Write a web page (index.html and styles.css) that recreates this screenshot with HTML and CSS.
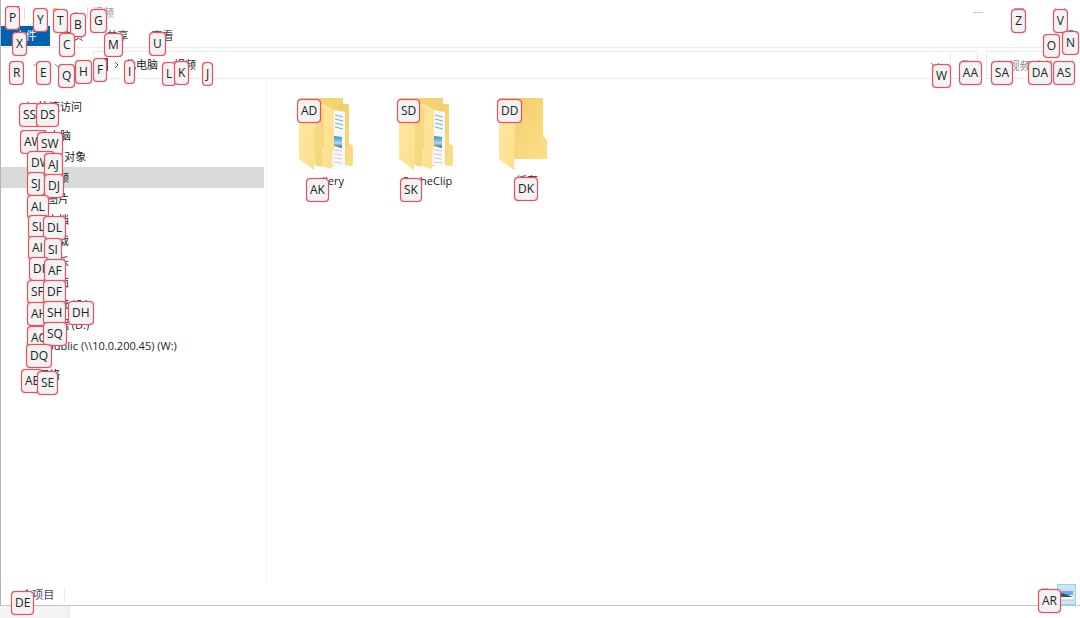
FILE: index.html
```html
<!DOCTYPE html>
<html lang="zh-CN">
<head>
    <meta charset="UTF-8">
    <meta name="viewport" content="width=device-width, initial-scale=1.0">
    <title>视频</title>
    <link rel="stylesheet" href="styles.css">
</head>
<body>
    <svg width="0" height="0" class="defs" aria-hidden="true">
        <defs>
            <linearGradient id="back" x1="0" y1="0" x2="1" y2="1">
                <stop offset="0" stop-color="#efcb68"/>
                <stop offset="1" stop-color="#fcdf88"/>
            </linearGradient>
            <linearGradient id="front" x1="0" y1="0" x2="1" y2="1">
                <stop offset="0" stop-color="#ffe9a2"/>
                <stop offset="1" stop-color="#fbdf8c"/>
            </linearGradient>
            <linearGradient id="sky" x1="0" y1="0" x2="0" y2="1">
                <stop offset="0" stop-color="#2e8fd0"/>
                <stop offset="0.6" stop-color="#a9d8ee"/>
                <stop offset="1" stop-color="#2f6470"/>
            </linearGradient>
            <symbol id="folder-full" viewBox="0 0 60 76">
                <path d="M2 2h43q1 0 1 1v67H20z" fill="#f5d375"/>
                <path d="M46 8h5q1 0 1 1v38l4 3v18q0 2-2 2l-12-2V8z" fill="url(#back)"/>
                <path d="M37 14l11 2v56l-13-3z" fill="#f8f8f8"/>
                <path d="M38 19l8 2M38 23l8 2M38 27l8 2M38 31l8 2" stroke="#63b5dc"/>
                <path d="M37 40l8 1v11l-8-2z" fill="url(#sky)"/>
                <path d="M37 54l8 1M37 58l8 1M37 62l8 1M37 66l8 1" stroke="#ccc"/>
                <path d="M19 9l8-1 10 6v38l-2 3v18l-19-5z" fill="url(#front)"/>
                <path d="M18 9l9 3v38l-2 3v18l-7-2z" fill="#efcc6c" opacity=".5"/>
                <path d="M2 3l16 8v38q0 3-1 5v20L3 64q-1-1-1-3z" fill="url(#front)"/>
            </symbol>
            <symbol id="folder-empty" viewBox="0 0 60 76">
                <path d="M17 71l5 2-5 1zM46 62l9-1-5 2z" fill="#eee"/>
                <path d="M2 2h43q1 0 1 1v37l4 4v17q0 2-2 2H18L2 50z" fill="url(#back)"/>
                <path d="M2 3l16 8v38q0 3-1 5v20L3 64q-1-1-1-3z" fill="url(#front)"/>
            </symbol>
        </defs>
    </svg>

    <div class="window">
        <header class="title-bar">
            <svg class="app-icon" viewBox="0 0 14 14"><path d="M1 0h12v12H1z" fill="#4b4a5e"/><path d="M3 3h8v6H3z" fill="#b9d3ec"/></svg>
            <span class="divider"></span>
            <div class="quick-tools">
                <button type="button" aria-label="属性"><svg viewBox="0 0 10 10"><path d="M1 .5h8v9H1z" fill="#fff" stroke="#aaa"/><path d="M3 5l2 2 3-4" fill="none" stroke="#c44"/></svg></button>
                <button type="button" aria-label="新建文件夹"><svg viewBox="0 0 10 10"><path d="M0 0h4l1 1h5v8H0z" fill="#f6c65b"/></svg></button>
                <button type="button" aria-label="自定义快速访问工具栏"><svg viewBox="0 0 10 10"><path d="M3 5h4M3 7l2 2 2-2" fill="none" stroke="#888"/></svg></button>
            </div>
            <span class="divider"></span>
            <h1 class="title">视频</h1>
            <div class="window-buttons">
                <button type="button" aria-label="最小化"><svg viewBox="0 0 10 10"><path d="M0 4.5h10" stroke="#ccc"/></svg></button>
                <button type="button" aria-label="最大化"><svg viewBox="0 0 10 10"><path d="M.5.5h9v9h-9z" fill="none" stroke="#aaa"/></svg></button>
                <button type="button" aria-label="关闭"><svg viewBox="0 0 10 10"><path d="M0 0l10 10M10 0L0 10" stroke="#aaa"/></svg></button>
            </div>
        </header>

        <nav class="ribbon">
            <button type="button" class="tab tab-file">文件</button>
            <button type="button" class="tab">主页</button>
            <button type="button" class="tab">共享</button>
            <button type="button" class="tab">查看</button>
            <div class="ribbon-tools">
                <button type="button" aria-label="展开功能区"><svg viewBox="0 0 10 10"><path d="M2 4l3 3 3-3" fill="none" stroke="#777"/></svg></button>
                <button type="button" class="help" aria-label="帮助"><svg viewBox="0 0 10 10"><circle cx="5" cy="5" r="5" fill="#1f6fc4"/></svg></button>
            </div>
        </nav>

        <div class="address-row">
            <div class="history">
                <button type="button" aria-label="后退"><svg viewBox="0 0 10 10"><path d="M9 5H1l3-3M1 5l3 3" fill="none" stroke="#666"/></svg></button>
                <button type="button" aria-label="前进"><svg viewBox="0 0 10 10"><path d="M1 5h8L6 2M9 5L6 8" fill="none" stroke="#aaa"/></svg></button>
                <button type="button" aria-label="最近浏览的位置"><svg viewBox="0 0 10 10"><path d="M2 4l3 3 3-3" fill="none" stroke="#888"/></svg></button>
                <button type="button" aria-label="上移"><svg viewBox="0 0 10 10"><path d="M5 9V1L2 4M5 1l3 3" fill="none" stroke="#666"/></svg></button>
            </div>
            <div class="address">
                <svg class="app-icon" viewBox="0 0 14 14"><path d="M1 0h12v13H1z" fill="#4b4a5e"/><path d="M2 2h9v10H2z" fill="#e4eef8"/></svg>
                <svg class="chevron" viewBox="0 0 6 10"><path d="M1 2l3 3-3 3" fill="none" stroke="#555"/></svg>
                <a href="#">此电脑</a>
                <svg class="chevron" viewBox="0 0 6 10"><path d="M1 2l3 3-3 3" fill="none" stroke="#555"/></svg>
                <a href="#">视频</a>
                <button type="button" class="drop" aria-label="以前的位置"><svg viewBox="0 0 10 10"><path d="M1 3l4 4 4-4" fill="none" stroke="#777"/></svg></button>
                <button type="button" class="refresh" aria-label="刷新"><svg viewBox="0 0 10 10"><path d="M8 2a4 4 0 1 0 1 4M8 0v3H5" fill="none" stroke="#777"/></svg></button>
            </div>
            <input class="search" type="search" aria-label="搜索" placeholder="在 视频 中搜索">
        </div>

        <div class="body">
            <aside class="tree">
                <a href="#" class="node root"><svg viewBox="0 0 12 12"><path d="M6 0l2 4 4 1-3 3 1 4-4-2-4 2 1-4-3-3 4-1z" fill="#3a8fdc"/></svg>快速访问</a>
                <a href="#" class="node root"><svg viewBox="0 0 12 12"><path d="M0 1h12v8H0zM3 11h6" fill="#6fb6e8" stroke="#555"/></svg>此电脑</a>
                <a href="#" class="node"><svg viewBox="0 0 12 12"><path d="M6 0l5 3v6l-5 3-5-3V3z" fill="#46b1c9"/></svg>3D 对象</a>
                <a href="#" class="node selected"><svg viewBox="0 0 12 12"><path d="M0 1h12v10H0z" fill="#4b4a5e"/><path d="M2 3h8v6H2z" fill="#b9d3ec"/></svg>视频</a>
                <a href="#" class="node"><svg viewBox="0 0 12 12"><path d="M0 2h12v8H0z" fill="#7cc0ea"/><path d="M0 10l4-4 3 3 2-2 3 3z" fill="#3c7a6b"/></svg>图片</a>
                <a href="#" class="node"><svg viewBox="0 0 12 12"><path d="M2 0h8v12H2z" fill="#dde6ee"/><path d="M4 3h4M4 6h4M4 9h4" stroke="#5b8db8"/></svg>文档</a>
                <a href="#" class="node"><svg viewBox="0 0 12 12"><path d="M6 0v9M2 6l4 4 4-4" fill="none" stroke="#2e7fd6" stroke-width="2"/></svg>下载</a>
                <a href="#" class="node"><svg viewBox="0 0 12 12"><path d="M5 9V1l5 2" fill="none" stroke="#2e7fd6" stroke-width="2"/><circle cx="4" cy="9" r="2" fill="#2e7fd6"/></svg>音乐</a>
                <a href="#" class="node"><svg viewBox="0 0 12 12"><path d="M0 2h12v8H0z" fill="#2e9be6"/></svg>桌面</a>
                <a href="#" class="node"><svg viewBox="0 0 12 12"><path d="M0 5h12v5H0z" fill="#999"/><path d="M1 1h4v3H1z" fill="#2e9be6"/></svg>系统 (C:)</a>
                <a href="#" class="node"><svg viewBox="0 0 12 12"><path d="M0 4h12v5H0z" fill="#999"/></svg>数据 (D:)</a>
                <a href="#" class="node"><svg viewBox="0 0 12 12"><path d="M0 2h12v5H0z" fill="#999"/><path d="M6 7v4M1 11h10" stroke="#3a9b5c"/></svg>public (\\10.0.200.45) (W:)</a>
                <a href="#" class="node root"><svg viewBox="0 0 12 12"><path d="M1 1h10v7H1zM3 11h6" fill="#4aa3e6" stroke="#666"/></svg>网络</a>
            </aside>

            <main class="files">
                <a href="#" class="file"><svg><use href="#folder-full"/></svg><span>gallery</span></a>
                <a href="#" class="file"><svg><use href="#folder-full"/></svg><span>CacheClip</span></a>
                <a href="#" class="file"><svg><use href="#folder-empty"/></svg><span>缓存</span></a>
            </main>
        </div>

        <footer class="status">
            <span class="count">3 个项目</span>
            <div class="views">
                <button type="button" aria-label="详细信息"><svg viewBox="0 0 14 14"><path d="M1 1h6M1 4h12M1 7h12M1 10h12" stroke="#888"/></svg></button>
                <button type="button" class="active" aria-label="大图标"><svg viewBox="0 0 14 14"><path d="M0 2h14v10H0z" fill="#fff" stroke="#b8c6ce"/><path d="M1 3h12v4H1z" fill="#6fa8ee"/><path d="M1 5q6 1 12 4H1z" fill="#2c5a63"/></svg></button>
            </div>
        </footer>
    </div>
    <div class="taskbar"></div>

    <div class="hints" id="hints"></div>
    <script src="hints.js"></script>
</body>
</html>
```
FILE: styles.css
```css
:root {
    --line: #ececec;
    --blue: #0063b1;
    --hint: #e8505f;
}

* {
    margin: 0;
    padding: 0;
    box-sizing: border-box;
}

body {
    font-family: "Open Sans", "Noto Sans CJK SC", sans-serif;
    font-size: 11px;
    line-height: 16px;
    color: #222;
    background: #fff;
    height: 100vh;
    display: flex;
    flex-direction: column;
    overflow: hidden;
}

a {
    color: inherit;
    text-decoration: none;
}

button {
    font: inherit;
    color: inherit;
    background: none;
    border: 0;
    display: flex;
    align-items: center;
    justify-content: center;
}

button svg {
    width: 10px;
    height: 10px;
}

.defs {
    position: absolute;
}

.window {
    flex: 1;
    min-height: 0;
    display: flex;
    flex-direction: column;
    border-left: 1px solid #b4b4b4;
    border-bottom: 1px solid #c4c4c4;
}

/* Title bar */
.title-bar {
    display: flex;
    align-items: center;
    gap: 4px;
    height: 26px;
    padding-left: 5px;
}

.app-icon {
    width: 14px;
    height: 14px;
}

.quick-tools {
    display: flex;
    gap: 8px;
    padding: 0 2px 0 6px;
}

.divider {
    width: 1px;
    height: 12px;
    background: #ddd;
}

.title {
    font-size: 11px;
    font-weight: 400;
    color: #999;
}

.window-buttons {
    display: flex;
    margin-left: auto;
}

.window-buttons button {
    width: 41px;
    height: 26px;
}

/* Ribbon */
.ribbon {
    display: flex;
    height: 22px;
    border-bottom: 1px solid var(--line);
}

.tab {
    width: 45px;
    height: 20px;
    color: #444;
}

.tab-file {
    width: 49px;
    color: #fff;
    background: var(--blue);
}

.ribbon-tools {
    display: flex;
    gap: 8px;
    margin-left: auto;
    padding-right: 4px;
}

.help {
    align-items: flex-start;
    padding-top: 4px;
}

/* Address bar */
.address-row {
    display: flex;
    gap: 8px;
    padding: 3px 7px 3px 8px;
}

.history {
    display: flex;
    align-items: center;
    gap: 8px;
    width: 76px;
}

.history button {
    width: 14px;
}

.address {
    flex: 1;
    display: flex;
    align-items: center;
    gap: 5px;
    height: 28px;
    padding-left: 1px;
    border: 1px solid var(--line);
}

.chevron {
    width: 6px;
    height: 10px;
}

.drop {
    width: 20px;
    margin-left: auto;
}

.refresh {
    width: 27px;
    height: 100%;
    border-left: 1px solid var(--line);
}

.search {
    width: 87px;
    height: 28px;
    padding: 0 8px;
    border: 1px solid var(--line);
    font: inherit;
    outline: none;
}

.search::placeholder {
    color: #888;
}

/* Content */
.body {
    flex: 1;
    min-height: 0;
    display: flex;
}

.tree {
    width: 266px;
    padding-top: 14px;
    border-right: 1px solid #f4f4f4;
}

.node {
    display: flex;
    align-items: center;
    gap: 4px;
    height: 21px;
    margin-right: 2px;
    padding-left: 30px;
}

.node svg {
    width: 12px;
    height: 12px;
}

.root {
    padding-left: 21px;
    margin-bottom: 8px;
}

.root:nth-child(2) {
    margin-bottom: 0;
}

.root:last-child {
    margin-top: 8px;
}

.selected {
    background: #d9d9d9;
}

.files {
    flex: 1;
    display: flex;
    align-items: flex-start;
    padding: 14px 10px;
}

.file {
    width: 100px;
    display: flex;
    flex-direction: column;
    align-items: center;
    gap: 1px;
}

.file svg {
    width: 60px;
    height: 76px;
}

/* Status bar */
.status {
    display: flex;
    align-items: center;
    height: 21px;
    padding: 0 4px 0 11px;
    color: #3c4a66;
}

.count {
    padding-right: 10px;
    border-right: 1px solid var(--line);
}

.views {
    display: flex;
    margin-left: auto;
}

.views button {
    width: 19px;
    height: 21px;
}

.views svg {
    width: 14px;
    height: 14px;
}

.views .active {
    background: #c9e8f6;
    border: 1px solid #9bd0e8;
}

.taskbar {
    width: 70px;
    height: 12px;
    background: linear-gradient(90deg, #f5f5f5 90%, #ebebeb);
}

/* Keyboard hints */
.hint {
    position: absolute;
    height: 24px;
    padding: 0 3px;
    border: 1px solid var(--hint);
    border-radius: 4px;
    background: #f3f3f3;
    box-shadow: 0 0 1px 0 var(--hint), inset 0 0 1px var(--hint);
    color: #222;
    font-family: inherit;
    font-size: 12px;
    line-height: 22px;
}
```
FILE: hints.js
```js
// label, x, y - negative values count from the right or bottom edge
const hints = [
    ['P', 5, 6], ['Y', 33, 8], ['T', 53, 9], ['B', 70, 13], ['G', 90, 9],
    ['X', 12, 32], ['C', 59, 33], ['M', 104, 33], ['U', 149, 32],
    ['R', 9, 61], ['E', 36, 61], ['Q', 58, 64], ['H', 75, 60], ['F', 93, 58],
    ['I', 124, 60], ['L', 162, 62], ['K', 174, 61], ['J', 202, 62],
    ['Z', -54, 9], ['V', -12, 9], ['O', -20, 34], ['N', -1, 31],
    ['W', -129, 64], ['AA', -98, 61], ['SA', -67, 61], ['DA', -28, 61], ['AS', -5, 61],
    ['SS', 19, 103], ['DS', 36, 103], ['AW', 20, 130], ['SW', 37, 132],
    ['DW', 27, 151], ['AJ', 44, 153], ['SJ', 27, 172], ['DJ', 44, 174],
    ['AL', 27, 195], ['SL', 28, 215], ['DL', 43, 216], ['AI', 28, 236], ['SI', 44, 238],
    ['DI', 29, 257], ['AF', 44, 259], ['SF', 27, 280], ['DF', 43, 280],
    ['AH', 27, 302], ['SH', 43, 301], ['DH', 68, 301], ['AQ', 27, 326], ['SQ', 43, 322],
    ['DQ', 26, 344], ['AE', 21, 369], ['SE', 37, 371],
    ['AD', 297, 99], ['SD', 397, 99], ['DD', 497, 99],
    ['AK', 306, 178], ['SK', 400, 178], ['DK', 514, 177],
    ['DE', 11, -3], ['AR', -19, -5]
];

const layer = document.getElementById('hints');

hints.forEach(function([label, x, y]) {
    const hint = document.createElement('kbd');
    hint.className = 'hint';
    hint.textContent = label;
    hint.style[x < 0 ? 'right' : 'left'] = Math.abs(x) + 'px';
    hint.style[y < 0 ? 'bottom' : 'top'] = Math.abs(y) + 'px';
    layer.appendChild(hint);
});
```
